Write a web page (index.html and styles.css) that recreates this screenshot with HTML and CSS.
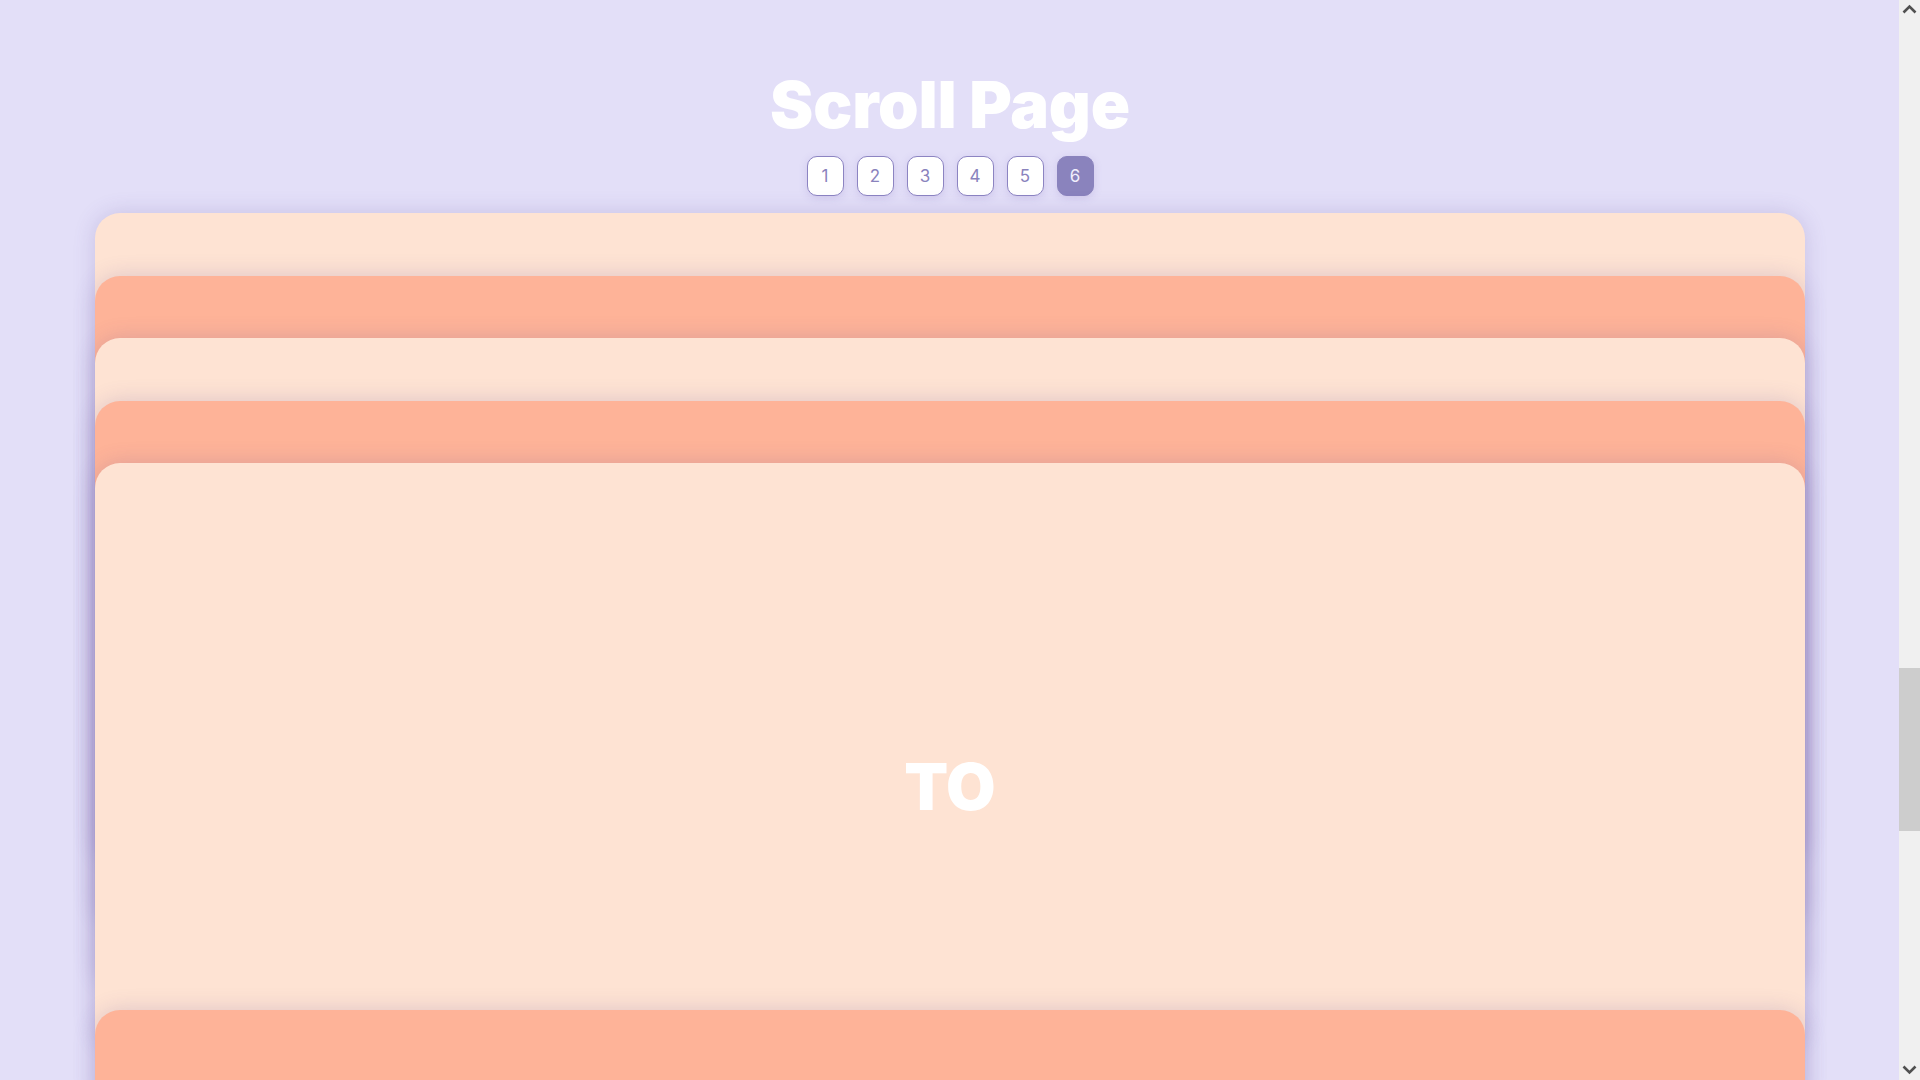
FILE: index.html
```
<!DOCTYPE html>
<html lang="en">
<head>
<meta charset="utf-8">
<title>Scroll Page</title>
<link rel="stylesheet" href="styles.css">
</head>
<body>
<div class="window">
  <div class="page">
    <header class="top">
      <h1 class="title">Scroll Page</h1>
      <nav class="pager">
        <button class="page-btn">1</button>
        <button class="page-btn">2</button>
        <button class="page-btn">3</button>
        <button class="page-btn">4</button>
        <button class="page-btn">5</button>
        <button class="page-btn is-active">6</button>
      </nav>
    </header>
    <main class="stack">
      <section class="card card-light card-peek"></section>
      <section class="card card-dark card-peek"></section>
      <section class="card card-light card-peek"></section>
      <section class="card card-dark card-peek"></section>
      <section class="card card-light card-main"><span class="word">TO</span></section>
      <section class="card card-dark"></section>
    </main>
  </div>
  <div class="scrollbar">
    <div class="sb-arrow">
      <svg width="21" height="20" viewBox="0 0 21 20"><polyline points="4.5,12.5 10.5,6.5 16.5,12.5" fill="none" stroke="#505050" stroke-width="2.6"/></svg>
    </div>
    <div class="sb-track">
      <div class="sb-gap"></div>
      <div class="sb-thumb"></div>
    </div>
    <div class="sb-arrow">
      <svg width="21" height="20" viewBox="0 0 21 20"><polyline points="4.5,6.5 10.5,12.5 16.5,6.5" fill="none" stroke="#505050" stroke-width="2.6"/></svg>
    </div>
  </div>
</div>
</body>
</html>
```
FILE: styles.css
```
html, body {
  margin: 0;
  padding: 0;
  background: #e3dff8;
  font-family: "Inter", "Noto Sans", sans-serif;
}
.window {
  display: flex;
  width: 1920px;
  height: 1080px;
  overflow: hidden;
}
.page {
  flex: 1;
  height: 1080px;
  overflow: hidden;
  padding: 0 94px 0 95px;
  box-sizing: border-box;
}
.top {
  height: 213px;
  box-sizing: border-box;
  padding-top: 72px;
  display: flex;
  flex-direction: column;
  align-items: center;
}
.title {
  margin: 0;
  font-family: "Inter", sans-serif;
  font-weight: 900;
  font-size: 65px;
  line-height: 65px;
  letter-spacing: -0.2px;
  color: #ffffff;
}
.pager {
  display: flex;
  gap: 13px;
  margin-top: 19px;
}
.page-btn {
  width: 37px;
  height: 40px;
  padding: 0;
  box-sizing: border-box;
  border: 1px solid #8c84c2;
  border-radius: 10px;
  background: #ffffff;
  color: #8a83bd;
  font-family: "Inter", sans-serif;
  font-size: 17px;
  font-weight: 400;
  box-shadow: 0 2px 8px rgba(110, 90, 180, 0.18);
}
.page-btn.is-active {
  background: #8a83bd;
  border-color: #8a83bd;
  color: #f1eefc;
}
.stack {
  display: flex;
  flex-direction: column;
}
.card {
  flex: none;
  height: 648px;
  border-radius: 25px;
  display: flex;
  align-items: center;
  justify-content: center;
  box-shadow: 0 0 22px rgba(90, 70, 150, 0.2);
}
.card-peek {
  margin-bottom: -585.5px;
}
.card-main {
  margin-bottom: -101px;
}
.card-light {
  background: #fee3d3;
}
.card-dark {
  background: #feb398;
}
.word {
  font-family: "Inter", sans-serif;
  font-weight: 900;
  font-size: 64px;
  line-height: 1;
  color: #ffffff;
}
.scrollbar {
  width: 21px;
  flex: none;
  height: 1080px;
  background: #f0f0f0;
  display: flex;
  flex-direction: column;
}
.sb-arrow {
  height: 20px;
  flex: none;
  display: flex;
}
.sb-track {
  flex: 1;
  display: flex;
  flex-direction: column;
}
.sb-gap {
  height: 648px;
  flex: none;
}
.sb-thumb {
  height: 163px;
  flex: none;
  background: #cdcdcd;
}
```
